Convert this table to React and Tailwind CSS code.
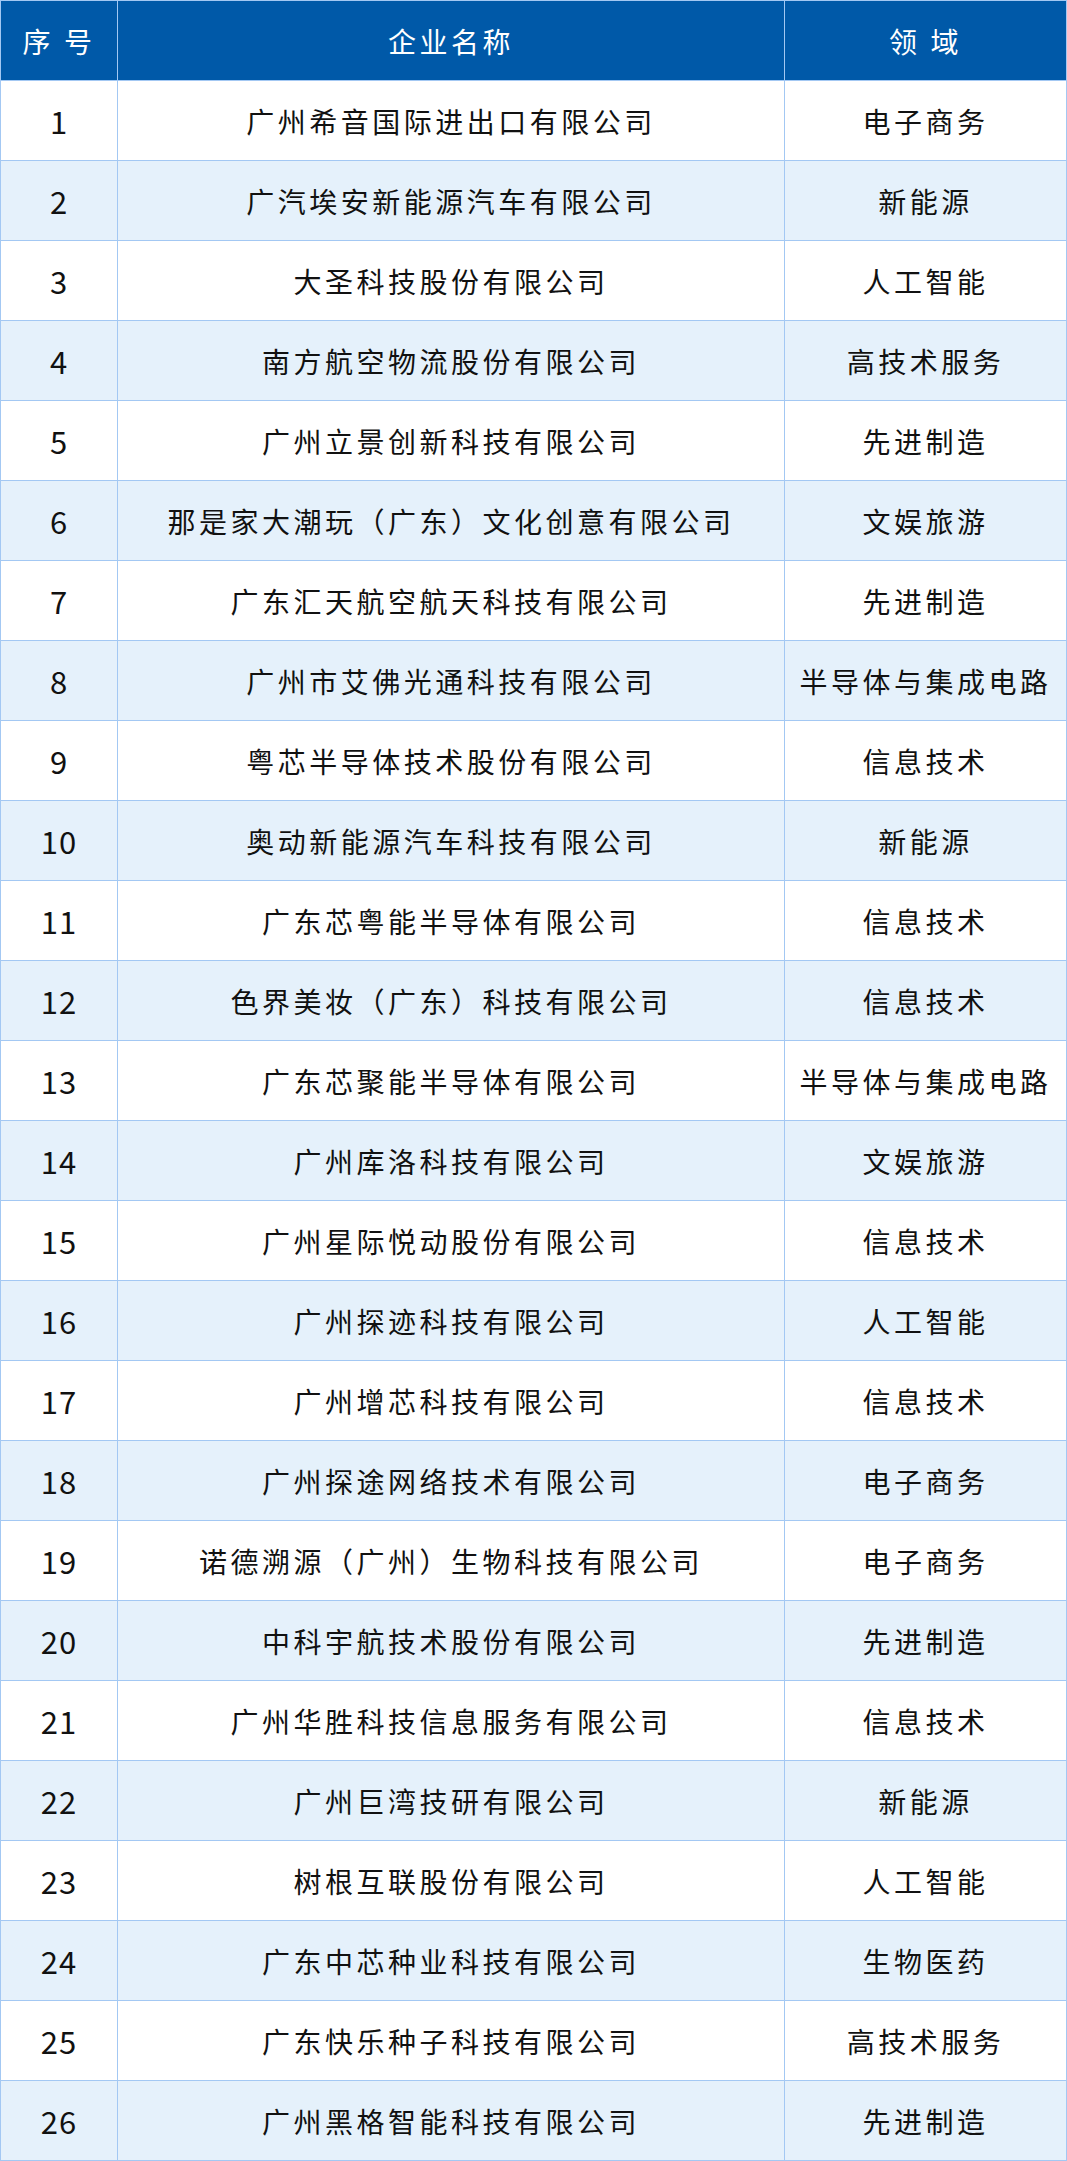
import React from "react";

const rows = [
  ["广州希音国际进出口有限公司", "电子商务"],
  ["广汽埃安新能源汽车有限公司", "新能源"],
  ["大圣科技股份有限公司", "人工智能"],
  ["南方航空物流股份有限公司", "高技术服务"],
  ["广州立景创新科技有限公司", "先进制造"],
  ["那是家大潮玩（广东）文化创意有限公司", "文娱旅游"],
  ["广东汇天航空航天科技有限公司", "先进制造"],
  ["广州市艾佛光通科技有限公司", "半导体与集成电路"],
  ["粤芯半导体技术股份有限公司", "信息技术"],
  ["奥动新能源汽车科技有限公司", "新能源"],
  ["广东芯粤能半导体有限公司", "信息技术"],
  ["色界美妆（广东）科技有限公司", "信息技术"],
  ["广东芯聚能半导体有限公司", "半导体与集成电路"],
  ["广州库洛科技有限公司", "文娱旅游"],
  ["广州星际悦动股份有限公司", "信息技术"],
  ["广州探迹科技有限公司", "人工智能"],
  ["广州增芯科技有限公司", "信息技术"],
  ["广州探途网络技术有限公司", "电子商务"],
  ["诺德溯源（广州）生物科技有限公司", "电子商务"],
  ["中科宇航技术股份有限公司", "先进制造"],
  ["广州华胜科技信息服务有限公司", "信息技术"],
  ["广州巨湾技研有限公司", "新能源"],
  ["树根互联股份有限公司", "人工智能"],
  ["广东中芯种业科技有限公司", "生物医药"],
  ["广东快乐种子科技有限公司", "高技术服务"],
  ["广州黑格智能科技有限公司", "先进制造"],
];

const cell =
  "h-[80px] flex items-center justify-center border-r border-b border-[#a3c8f3] leading-none";
const txt = "text-[28px] tracking-[3.5px]";

export default function App() {
  return (
    <div
      className="w-[1067px] bg-white"
      style={{ fontFamily: '"Noto Sans CJK SC", "Noto Sans", sans-serif' }}
    >
      <div className="grid grid-cols-[117px_667px_282px] border-l border-t border-[#a3c8f3]">
        <div className={`${cell} ${txt} bg-[#0059a8] text-white`}>序 号</div>
        <div className={`${cell} ${txt} bg-[#0059a8] text-white`}>企业名称</div>
        <div className={`${cell} ${txt} bg-[#0059a8] text-white`}>领 域</div>
        {rows.map(([name, field], i) => {
          const bg = i % 2 === 1 ? "bg-[#e5f1fb]" : "bg-white";
          return (
            <React.Fragment key={i}>
              <div className={`${cell} ${bg} text-[#111] text-[31px] tracking-[1px]`}>
                {i + 1}
              </div>
              <div className={`${cell} ${txt} ${bg} text-[#111]`}>{name}</div>
              <div className={`${cell} ${txt} ${bg} text-[#111]`}>{field}</div>
            </React.Fragment>
          );
        })}
      </div>
    </div>
  );
}
